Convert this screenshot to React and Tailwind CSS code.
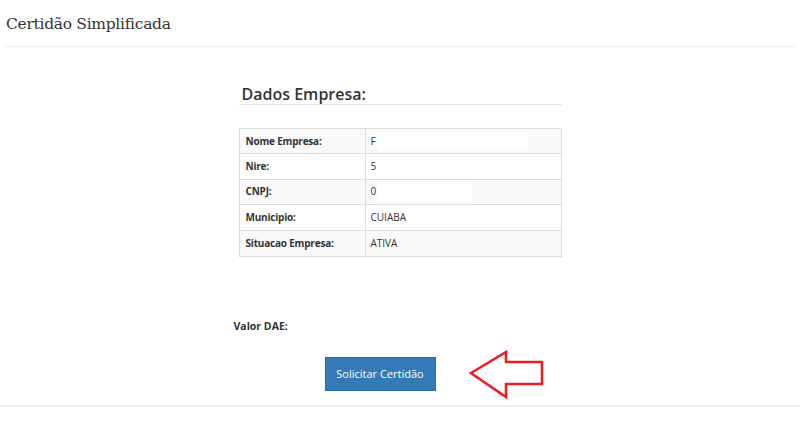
import React from 'react';

const rows = [
  { label: 'Nome Empresa:', value: 'F', mask: 151 },
  { label: 'Nire:', value: '5', mask: 0 },
  { label: 'CNPJ:', value: '0', mask: 95 },
  { label: 'Municipio:', value: 'CUIABA' },
  { label: 'Situacao Empresa:', value: 'ATIVA' },
];

// Red outlined arrow pointing left
const Arrow = () => (
  <svg width="78" height="50" viewBox="0 0 78 50" className="ml-[32px] shrink-0">
    <polygon
      points="3,24 38,3 38,13 74,13 74,35 38,35 38,48"
      fill="none"
      stroke="#ed1c24"
      strokeWidth="2.6"
      strokeLinejoin="miter"
    />
  </svg>
);

export default function App() {
  return (
    <div className="w-[800px] h-[434px] bg-white text-[#333] font-['Open_Sans',sans-serif] overflow-hidden">
      {/* Header */}
      <div className="h-[47px] mx-[5px] border-b border-[#ececec] flex items-center pt-1">
        <h1 className="pl-[1px] text-[15.5px] font-['DejaVu_Serif',serif] text-[#333] tracking-[-0.3px]">
          Certidão Simplificada
        </h1>
      </div>

      <div className="w-[323px] mx-auto">
        <h2 className="mt-[37px] pl-[3px] h-[21px] leading-[20px] text-[16px] font-semibold text-[#333] border-b border-[#e5e5e5]">
          Dados Empresa:
        </h2>

        {/* Company data table */}
        <div className="mt-[23px] border border-[#dddddd]">
          {rows.map((row, i) => (
            <div
              key={row.label}
              className={`grid grid-cols-[126px_1fr] h-[25.4px] text-[10px] ${i < rows.length - 1 ? 'border-b border-[#dddddd]' : ''} ${i % 2 === 0 ? 'bg-[#f9f9f9]' : 'bg-white'}`}
            >
              <div className="pl-[6px] flex items-center font-bold tracking-[-0.2px] border-r border-[#dddddd]">{row.label}</div>
              <div className="pl-[5px] flex items-center">
                <span>{row.value}</span>
                {row.mask ? <span className="inline-block bg-white h-[19px] ml-[1px]" style={{ width: row.mask }} /> : null}
              </div>
            </div>
          ))}
        </div>

        <div className="mt-[62px] -ml-[5px] text-[10.5px] leading-[15px] font-bold">Valor DAE:</div>

        <div className="mt-[15px] pl-[86px] flex items-center">
          <button className="w-[111px] h-[34px] bg-[#337ab7] border border-[#2e6da4] text-white text-[11px] shrink-0">
            Solicitar Certidão
          </button>
          <Arrow />
        </div>
      </div>

      <div className="mt-[6px] border-t-2 border-[#eeeeee]" />
    </div>
  );
}
